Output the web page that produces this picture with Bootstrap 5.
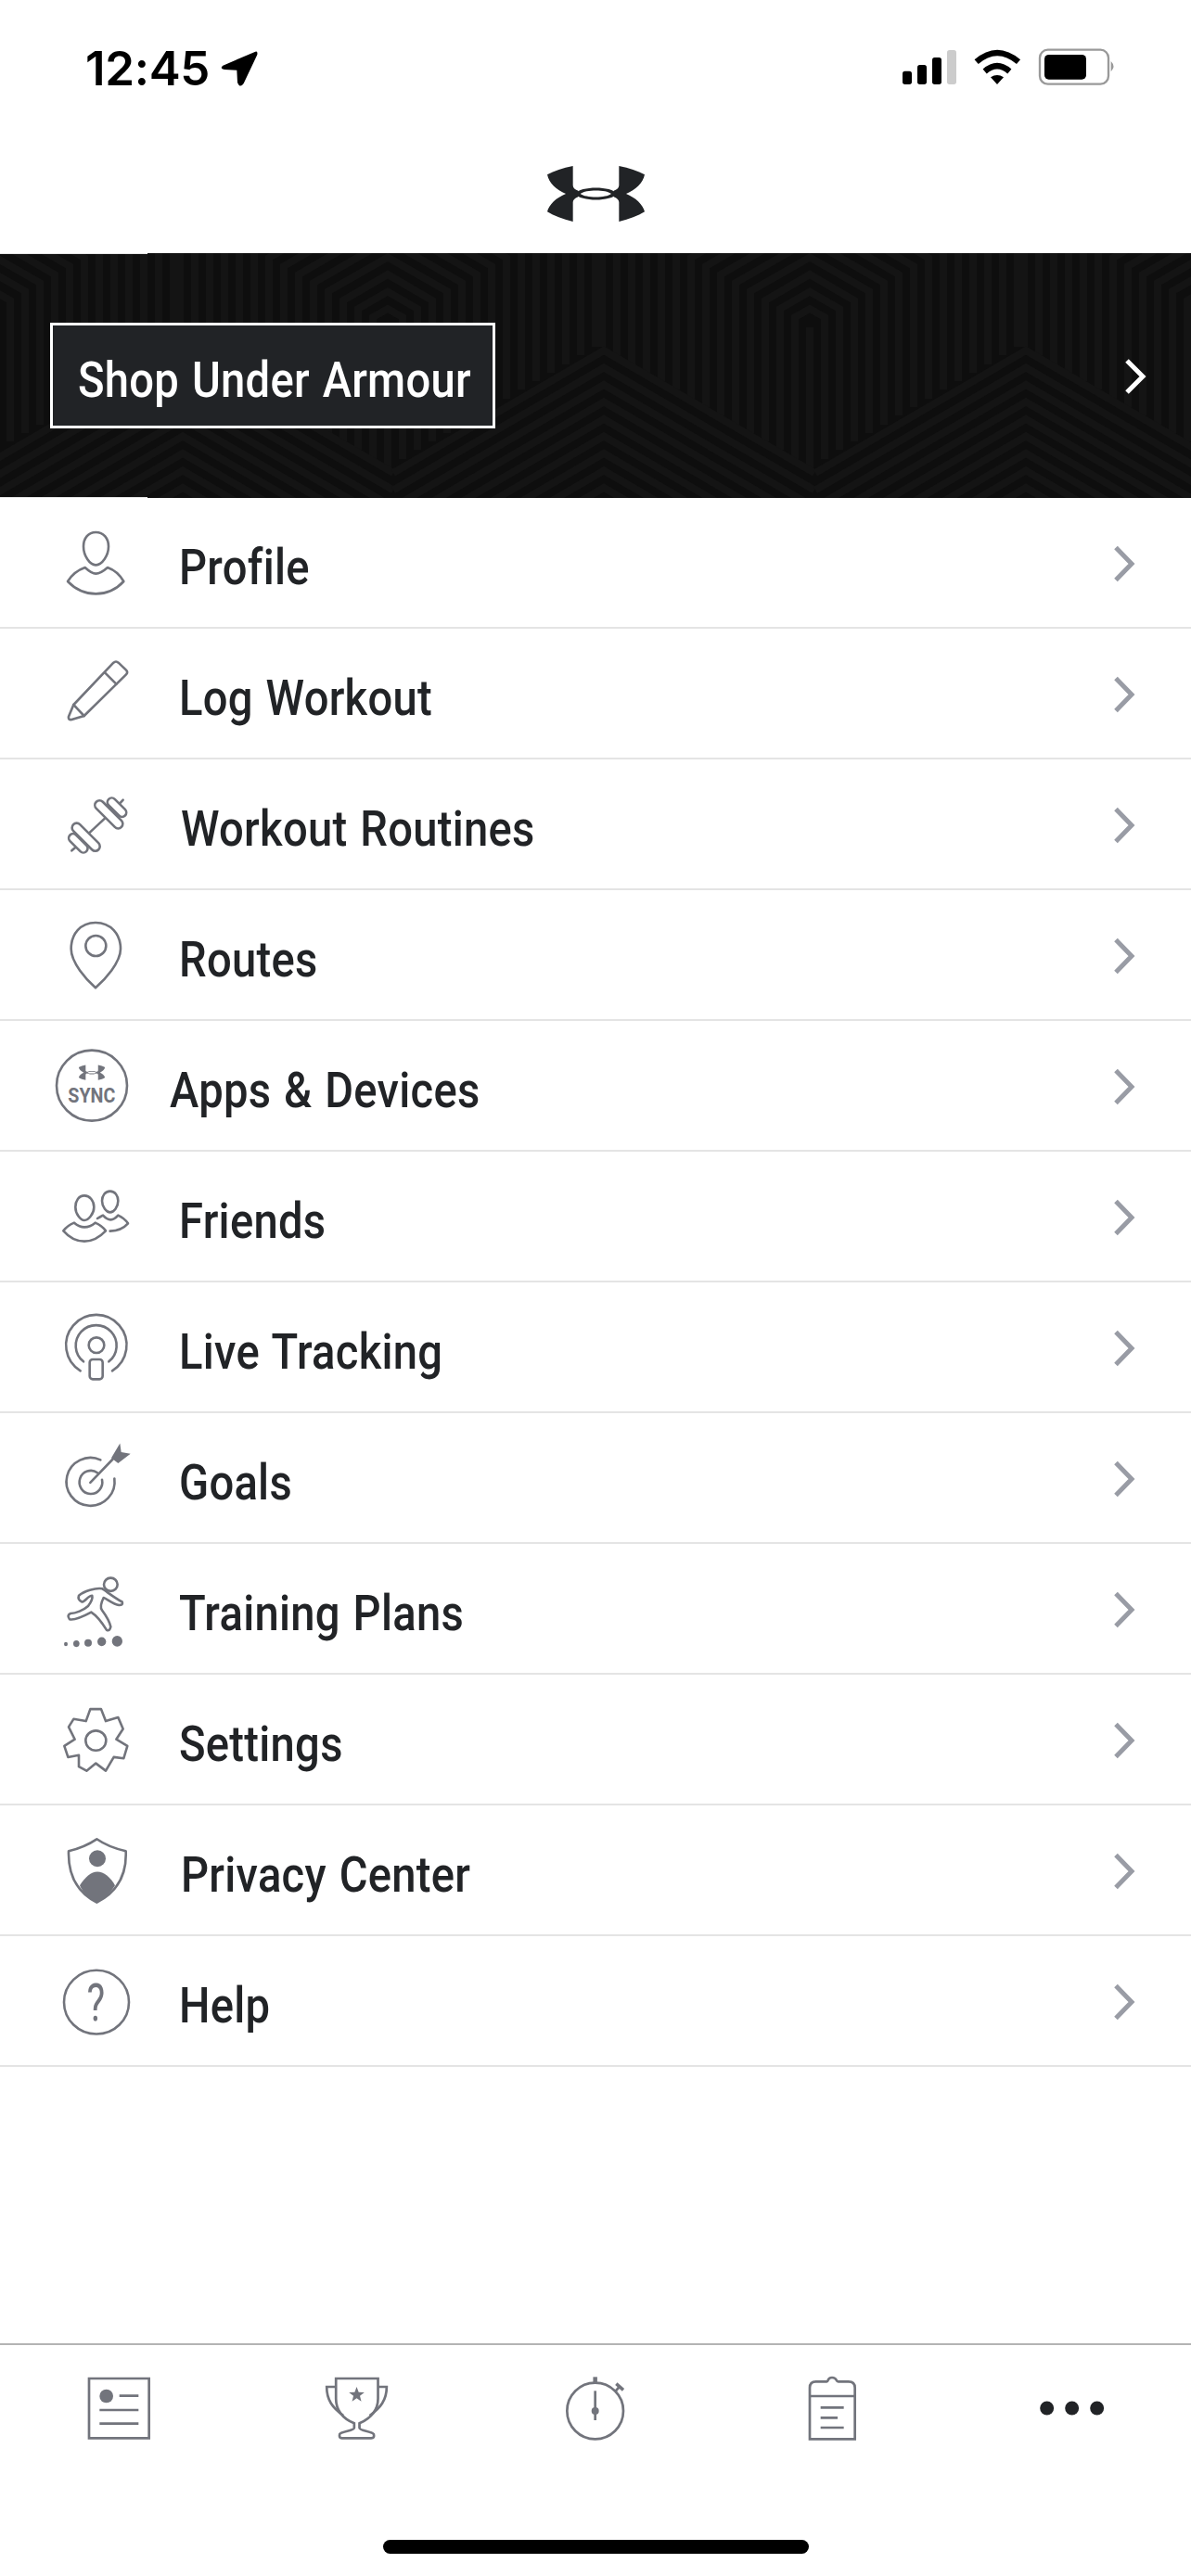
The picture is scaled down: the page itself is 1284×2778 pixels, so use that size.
<!DOCTYPE html>
<html lang="en">
<head>
<meta charset="utf-8">
<title>Under Armour menu</title>
<link href="https://cdn.jsdelivr.net/npm/bootstrap@5.3.0/dist/css/bootstrap.min.css" rel="stylesheet">
<style>
html,body{background:#fff;margin:0}
.screen{width:1284px;height:2778px;overflow:hidden;background:#fff}
.stat-bar{height:100px;padding:0 74px 0 92px}
.clock{font:600 51px/1 Inter,"Liberation Sans",sans-serif;color:#000;margin-top:48px;letter-spacing:-.3px}
.loc-arrow{margin:54px 0 0 11px}
.stat-icons{margin-top:40px}
.logo-bar{height:173px;padding-top:79px}
.hero{height:264px;background:#0e0e0e;padding-left:54px}
.hero::before,.hero::after{content:"";position:absolute;z-index:1;left:0;width:159px;height:1px;background:#e5e5e5}
.hero::before{top:0}.hero::after{bottom:0}
.hero-art{position:absolute;inset:0}
.hero-art path{fill:none;stroke:#141414;stroke-width:8}
.shop-btn{position:relative;width:480px;height:114px;background:#212326;border:3px solid #fff;border-radius:0;padding:10px 0 0 27px;color:#fff}
.shop-btn:hover{background:#212326;color:#fff}
.lbl{display:inline-block;white-space:nowrap;font:500 53px/1 Roboto,"Liberation Sans",sans-serif;letter-spacing:.3px;word-spacing:2px;transform-origin:left center;transform:scaleX(.89)}
.hero-chev{position:absolute;left:1207px;top:110px}
.menu-row{height:141px;border:0;border-bottom:2px solid #e4e4e4!important;color:#212326;padding:0}
.menu-row .lbl{margin-left:13px;padding-top:11px}
.menu-row .lbl.shift-r{margin-left:15px}
.menu-row .lbl.shift-l{margin-left:3px}
.row-ico{width:180px;height:141px;margin-bottom:-2px;flex:none}
.row-chev{margin:3px 56px 0 auto;flex:none}
.ico{fill:none;stroke:#72747c;stroke-width:2.6;stroke-linecap:round;stroke-linejoin:round}
.ico *{vector-effect:non-scaling-stroke}
.ico .fl{fill:#72747c;stroke:none}
.ico .wf{fill:#fff}
.tabs{border-top:2px solid #b4b4b4;padding-top:21px}
.tabs .ico{stroke-width:2.7;stroke-linecap:butt;stroke-linejoin:miter}
.tab{flex:1 1 0;height:100px;min-width:0}
.tab svg{display:block;width:100%;height:100px}
.home-bar{width:459px;height:15px;margin:89px auto 24px}
</style>
</head>
<body>
<div class="screen d-flex flex-column">
  <div class="stat-bar d-flex justify-content-between align-items-start">
    <div class="d-flex align-items-start">
      <span class="clock">12:45</span>
      <svg class="loc-arrow" width="42" height="42" viewBox="475 40 126 126"><path d="M590,45 L485,90 Q473,100 490,103 L530,105 L532,145 Q540,165 552,148 L596,55 Q598,42 590,45Z" fill="#000"/></svg>
    </div>
    <svg class="stat-icons" width="250" height="60" viewBox="60 30 750 180">
      <g fill="#000"><rect x="99" y="140" width="30" height="43" rx="8"/><rect x="147" y="120" width="30" height="63" rx="8"/><rect x="195" y="96" width="30" height="87" rx="8"/></g>
      <rect x="243" y="72" width="30" height="111" rx="8" fill="#ccc"/>
      <g fill="none" stroke="#000" stroke-width="19"><path d="M338,110 Q405,52 474,110"/><path d="M365,141 Q405,106 445,141"/></g>
      <path d="M405,183 L384,160 Q405,146 426,160Z" fill="#000"/>
      <rect x="543" y="71" width="222" height="111" rx="26" fill="none" stroke="#999" stroke-width="7"/>
      <rect x="558" y="87" width="135" height="80" rx="14" fill="#000"/>
      <path d="M773,108 Q790,125 773,142Z" fill="#999"/>
    </svg>
  </div>

  <div class="logo-bar d-flex justify-content-center align-items-start">
    <svg width="105" height="60" viewBox="90 60 315 180" fill="#212326">
      <g id="ua">
        <path d="M173,60 C140,66 112,76 90,88 C95,115 120,138 150,150 C120,162 95,185 90,208 C112,222 140,232 173,240 L173,178 C173,170 178,165 190,160 L190,140 C178,135 173,130 173,122Z"/>
        <path d="M322,60 C355,66 383,76 405,88 C400,115 375,138 345,150 C375,162 400,185 405,208 C383,222 355,232 322,240 L322,178 C322,170 317,165 305,160 L305,140 C317,135 322,130 322,122Z"/>
        <path fill-rule="evenodd" d="M178,150 C200,124 295,124 317,150 C295,176 200,176 178,150Z M197,150 C215,136 280,136 297,150 C280,164 215,164 197,150Z"/>
      </g>
    </svg>
  </div>

  <div class="hero position-relative d-flex align-items-center">
    <svg class="hero-art" width="1284" height="264" viewBox="0 0 1284 264">
      <defs>
        <g id="hexa"><path d="M0,80V232"/><path d="M-16,222V69L0,60L16,69V222"/><path d="M-32,212V60L0,41.5L32,60V212"/><path d="M-48,203V51L0,23L48,51V203"/><path d="M-64,194V41L0,4.5L64,41V194"/><path d="M-80,185V32L0,-14L80,32V185"/><path d="M-96,175V23L0,-32.5L96,23V175"/><path d="M-112,166V14L0,-51L112,14V166"/><path d="M-128,157V5L0,-69.5L128,5V157"/><path d="M-144,147V0M144,147V0M-160,138V0M160,138V0M-176,129V0M176,129V0M-192,120V0M192,120V0M-208,110V0M208,110V0M-224,101V0M224,101V0"/></g>
        <g id="chevb"><path d="M-227,237L0,105L227,237"/><path d="M-227,255.500L0,123.500L227,255.500"/><path d="M-227,274L0,142L227,274"/><path d="M-227,292.500L0,160.500L227,292.500"/><path d="M-227,311L0,179L227,311"/><path d="M-227,329.500L0,197.500L227,329.500"/><path d="M-227,348L0,216L227,348"/><path d="M-227,366.500L0,234.500L227,366.500"/><path d="M-227,385L0,253L227,385"/></g>
      </defs>
      <use href="#hexa" x="-37"/><use href="#hexa" x="418"/><use href="#hexa" x="873"/><use href="#hexa" x="1328"/>
      <use href="#chevb" x="-258"/><use href="#chevb" x="197"/><use href="#chevb" x="651"/><use href="#chevb" x="1106"/><use href="#chevb" x="1561"/>
    </svg>
    <a class="btn shop-btn text-start d-flex align-items-center" href="#"><span class="lbl">Shop Under Armour</span></a>
    <svg class="hero-chev" width="30" height="46" viewBox="0 0 30 46"><path d="M8,6 L25,23 L8,40" fill="none" stroke="#fff" stroke-width="5"/></svg>
  </div>

  <div class="list-group list-group-flush rounded-0">
    <a href="#" class="list-group-item menu-row d-flex align-items-center">
      <svg class="row-ico ico align-self-start" viewBox="-120 -39 540 423" preserveAspectRatio="none"><path d="M190,72 C165,72 150,92 150,118 C150,148 170,178 190,178 C210,178 231,148 231,118 C231,92 215,72 190,72Z"/><path d="M155,186 C170,200 178,206 190,206 C202,206 212,200 228,186 C250,194 268,210 280,231 C255,258 225,271 190,271 C155,271 125,258 99,231 C112,210 132,194 155,186Z"/></svg>
      <span class="lbl">Profile</span>
      <svg class="row-chev" width="30" height="46" viewBox="0 0 30 46"><path d="M5,5.500 L22,23 L5,40.500" fill="none" stroke="#999ca5" stroke-width="5"/></svg>
    </a>
    <a href="#" class="list-group-item menu-row d-flex align-items-center">
      <svg class="row-ico ico align-self-start" viewBox="-120 384 540 423" preserveAspectRatio="none"><path d="M118,630 L247,494 Q255,487 263,494 L288,518 Q295,525 288,532 L152,666 L112,678 Q100,680 102,668Z"/><path d="M118,630 L152,666M220,527 L256,563"/></svg>
      <span class="lbl">Log Workout</span>
      <svg class="row-chev" width="30" height="46" viewBox="0 0 30 46"><path d="M5,5.500 L22,23 L5,40.500" fill="none" stroke="#999ca5" stroke-width="5"/></svg>
    </a>
    <a href="#" class="list-group-item menu-row d-flex align-items-center">
      <svg class="row-ico ico align-self-start" viewBox="-120 807 540 423" preserveAspectRatio="none"><path d="M112,1102 L128,1088M165,1048 L222,995M262,955 L278,938"/><rect class="wf" x="95.500" y="1064" width="75" height="28" rx="14" transform="rotate(45 133 1078)"/><rect class="wf" x="100.500" y="1043" width="115" height="30" rx="15" transform="rotate(45 158 1058)"/><rect class="wf" x="220.500" y="948" width="75" height="28" rx="14" transform="rotate(45 258 962)"/><rect class="wf" x="174.500" y="970" width="115" height="30" rx="15" transform="rotate(45 232 985)"/></svg>
      <span class="lbl shift-r">Workout Routines</span>
      <svg class="row-chev" width="30" height="46" viewBox="0 0 30 46"><path d="M5,5.500 L22,23 L5,40.500" fill="none" stroke="#999ca5" stroke-width="5"/></svg>
    </a>
    <a href="#" class="list-group-item menu-row d-flex align-items-center">
      <svg class="row-ico ico align-self-start" viewBox="-120 1230 540 423" preserveAspectRatio="none"><path d="M189,1335 C140,1335 110,1372 110,1420 C110,1465 160,1520 189,1546 C218,1520 270,1465 270,1420 C270,1372 238,1335 189,1335Z"/><circle cx="190" cy="1410" r="33"/></svg>
      <span class="lbl">Routes</span>
      <svg class="row-chev" width="30" height="46" viewBox="0 0 30 46"><path d="M5,5.500 L22,23 L5,40.500" fill="none" stroke="#999ca5" stroke-width="5"/></svg>
    </a>
    <a href="#" class="list-group-item menu-row d-flex align-items-center">
      <svg class="row-ico ico align-self-start" viewBox="-120 -27 540 423" preserveAspectRatio="none"><circle cx="177" cy="182" r="114"/><use class="fl" href="#ua" transform="translate(177,140) scale(.27) translate(-247,-150)"/><text class="fl" x="100" y="236" font-family="Roboto,sans-serif" font-weight="700" font-size="66" textLength="153" lengthAdjust="spacingAndGlyphs">SYNC</text></svg>
      <span class="lbl shift-l">Apps &amp; Devices</span>
      <svg class="row-chev" width="30" height="46" viewBox="0 0 30 46"><path d="M5,5.500 L22,23 L5,40.500" fill="none" stroke="#999ca5" stroke-width="5"/></svg>
    </a>
    <a href="#" class="list-group-item menu-row d-flex align-items-center">
      <svg class="row-ico ico align-self-start" viewBox="-120 396 540 423" preserveAspectRatio="none"><path d="M153,538 C135,538 124,555 124,575 C124,597 140,618 153,618 C166,618 184,597 184,575 C184,555 170,538 153,538Z"/><path d="M120,626 C132,636 142,640 153,640 C165,640 176,636 188,626 C203,632 213,640 222,652 C200,675 178,686 153,686 C128,686 105,675 85,652 C94,640 105,632 120,626Z"/><path d="M236,524 C220,524 210,538 210,555 C210,575 225,592 236,592 C248,592 262,575 262,555 C262,538 252,524 236,524Z"/><path d="M195,612 C205,606 210,603 213,602 C222,612 230,616 238,616 C247,616 255,610 262,602 C275,608 287,618 294,628 C280,644 260,652 236,653"/></svg>
      <span class="lbl">Friends</span>
      <svg class="row-chev" width="30" height="46" viewBox="0 0 30 46"><path d="M5,5.500 L22,23 L5,40.500" fill="none" stroke="#999ca5" stroke-width="5"/></svg>
    </a>
    <a href="#" class="list-group-item menu-row d-flex align-items-center">
      <svg class="row-ico ico align-self-start" viewBox="-120 819 540 423" preserveAspectRatio="none"><path d="M140,1105 A98,98 0 1 1 243,1105"/><path d="M150,1075 A66,66 0 1 1 232,1075"/><circle cx="192" cy="1022" r="25"/><rect x="170" y="1068" width="42" height="64" rx="10"/></svg>
      <span class="lbl">Live Tracking</span>
      <svg class="row-chev" width="30" height="46" viewBox="0 0 30 46"><path d="M5,5.500 L22,23 L5,40.500" fill="none" stroke="#999ca5" stroke-width="5"/></svg>
    </a>
    <a href="#" class="list-group-item menu-row d-flex align-items-center">
      <svg class="row-ico ico align-self-start" viewBox="-120 -35.840 540 315.840" preserveAspectRatio="none"><path d="M205,77 A78,58 0 1 0 250,122"/><path d="M195,108 A37,28 0 1 0 210,125"/><path d="M172,132 L245,75"/><path class="fl" d="M240,72 L268,37 L272,58 L302,62 L262,85Z"/></svg>
      <span class="lbl">Goals</span>
      <svg class="row-chev" width="30" height="46" viewBox="0 0 30 46"><path d="M5,5.500 L22,23 L5,40.500" fill="none" stroke="#999ca5" stroke-width="5"/></svg>
    </a>
    <a href="#" class="list-group-item menu-row d-flex align-items-center">
      <svg class="row-ico ico align-self-start" viewBox="-120 280 540 315.840" preserveAspectRatio="none"><ellipse cx="238" cy="378" rx="22" ry="16"/><path d="M135,405 C150,395 190,385 210,388 C225,395 250,410 275,420 Q280,428 265,428 C245,425 225,412 215,410 C205,425 205,435 210,440 C225,455 235,470 238,480 Q235,492 225,488 C210,470 190,452 175,445 C150,455 120,465 105,462 Q95,452 108,448 C125,448 150,440 165,430 C175,420 180,410 178,405 C165,405 155,420 145,420 Q130,415 135,405Z"/><ellipse class="fl" cx="93" cy="522" rx="6" ry="5"/><ellipse class="fl" cx="127" cy="521" rx="10" ry="8"/><ellipse class="fl" cx="165" cy="519" rx="12" ry="9"/><ellipse class="fl" cx="209" cy="516" rx="14" ry="11"/><ellipse class="fl" cx="259" cy="515" rx="17" ry="13"/></svg>
      <span class="lbl">Training Plans</span>
      <svg class="row-chev" width="30" height="46" viewBox="0 0 30 46"><path d="M5,5.500 L22,23 L5,40.500" fill="none" stroke="#999ca5" stroke-width="5"/></svg>
    </a>
    <a href="#" class="list-group-item menu-row d-flex align-items-center">
      <svg class="row-ico ico align-self-start" viewBox="-120 595.840 540 315.840" preserveAspectRatio="none"><path d="M172,679 L207,679 L222,708 L262,699 L278,727 L256,752 L292,768 L280,798 L248,795 L222,828 L190,810 L160,828 L135,818 L135,790 L100,795 L88,768 L122,752 L102,722 L118,703 L158,708Z"/><ellipse cx="190" cy="755" rx="33" ry="24"/></svg>
      <span class="lbl">Settings</span>
      <svg class="row-chev" width="30" height="46" viewBox="0 0 30 46"><path d="M5,5.500 L22,23 L5,40.500" fill="none" stroke="#999ca5" stroke-width="5"/></svg>
    </a>
    <a href="#" class="list-group-item menu-row d-flex align-items-center">
      <svg class="row-ico ico align-self-start" viewBox="-120 911.680 540 315.840" preserveAspectRatio="none"><path d="M193,993 C165,1007 135,1016 102,1022 C100,1075 125,1120 193,1146 C262,1120 290,1075 287,1022 C250,1016 220,1007 193,993Z"/><ellipse class="fl" cx="195" cy="1040" rx="27" ry="20"/><path class="fl" d="M138,1105 C155,1085 175,1072 195,1072 C215,1072 238,1085 252,1105 C235,1125 215,1140 193,1146 C172,1140 150,1125 138,1105Z"/></svg>
      <span class="lbl shift-r">Privacy Center</span>
      <svg class="row-chev" width="30" height="46" viewBox="0 0 30 46"><path d="M5,5.500 L22,23 L5,40.500" fill="none" stroke="#999ca5" stroke-width="5"/></svg>
    </a>
    <a href="#" class="list-group-item menu-row d-flex align-items-center">
      <svg class="row-ico ico align-self-start" viewBox="-120 1227.520 540 315.840" preserveAspectRatio="none"><ellipse cx="192" cy="1387" rx="105" ry="77"/><text class="fl" x="190" y="1432" text-anchor="middle" font-family="Roboto,sans-serif" font-weight="400" font-size="125">?</text></svg>
      <span class="lbl">Help</span>
      <svg class="row-chev" width="30" height="46" viewBox="0 0 30 46"><path d="M5,5.500 L22,23 L5,40.500" fill="none" stroke="#999ca5" stroke-width="5"/></svg>
    </a>
  </div>

  <div class="mt-auto">
    <div class="tabs d-flex">
      <div class="tab"><svg class="ico" viewBox="-210 0 770.400 300" preserveAspectRatio="none"><rect x="78" y="45" width="194" height="193"/><circle class="fl" cx="134" cy="102" r="22"/><path d="M176,101 H238M112,147 H238M112,191 H238"/></svg></div>
      <div class="tab"><svg class="ico" viewBox="560.400 0 770.400 300" preserveAspectRatio="none"><path d="M876,45 L876,110 C876,150 900,175 935,190 L935,205 C935,215 895,215 888,225 Q885,238 895,238 L990,238 Q1002,238 998,225 C990,215 952,215 952,205 L952,190 C985,175 1012,150 1012,110 L1012,45Z"/><path d="M876,72 L846,72 C846,115 865,140 900,165M1012,72 L1040,72 C1040,115 1020,140 985,165"/><polygon class="fl" points="943,72 949.500,89 968,90 953.500,101.400 958,119 943,109 928,119 932.500,101.400 918,90 936.500,89"/></svg></div>
      <div class="tab"><svg class="ico" viewBox="-229 0 770.400 300" preserveAspectRatio="none"><circle cx="154" cy="150" r="91"/><path d="M154,40 V60" stroke-width="4.500"/><path d="M154,85 V180"/><circle class="fl" cx="154" cy="150" r="12"/><path d="M218,88 L232,72"/><path d="M222,62 L245,82" stroke-width="3.500"/></svg></div>
      <div class="tab"><svg class="ico" viewBox="541 0 770.400 300" preserveAspectRatio="none"><path d="M850,241 L850,75 Q850,55 870,55 L905,55 C912,55 905,42 922,42 C940,42 933,55 942,55 L975,55 Q996,55 996,75 L996,241Z"/><path d="M850,102 H996M885,139 H960M885,172 H940M885,204 H960"/></svg></div>
      <div class="tab"><svg viewBox="0 0 770.400 300" preserveAspectRatio="none"><g fill="#212326"><circle cx="305" cy="141" r="22.500"/><circle cx="386" cy="141" r="22.500"/><circle cx="467" cy="141" r="22.500"/></g></svg></div>
    </div>
    <div class="home-bar bg-black rounded-pill"></div>
  </div>
</div>
<script src="https://cdn.jsdelivr.net/npm/bootstrap@5.3.0/dist/js/bootstrap.bundle.min.js"></script>
</body>
</html>
